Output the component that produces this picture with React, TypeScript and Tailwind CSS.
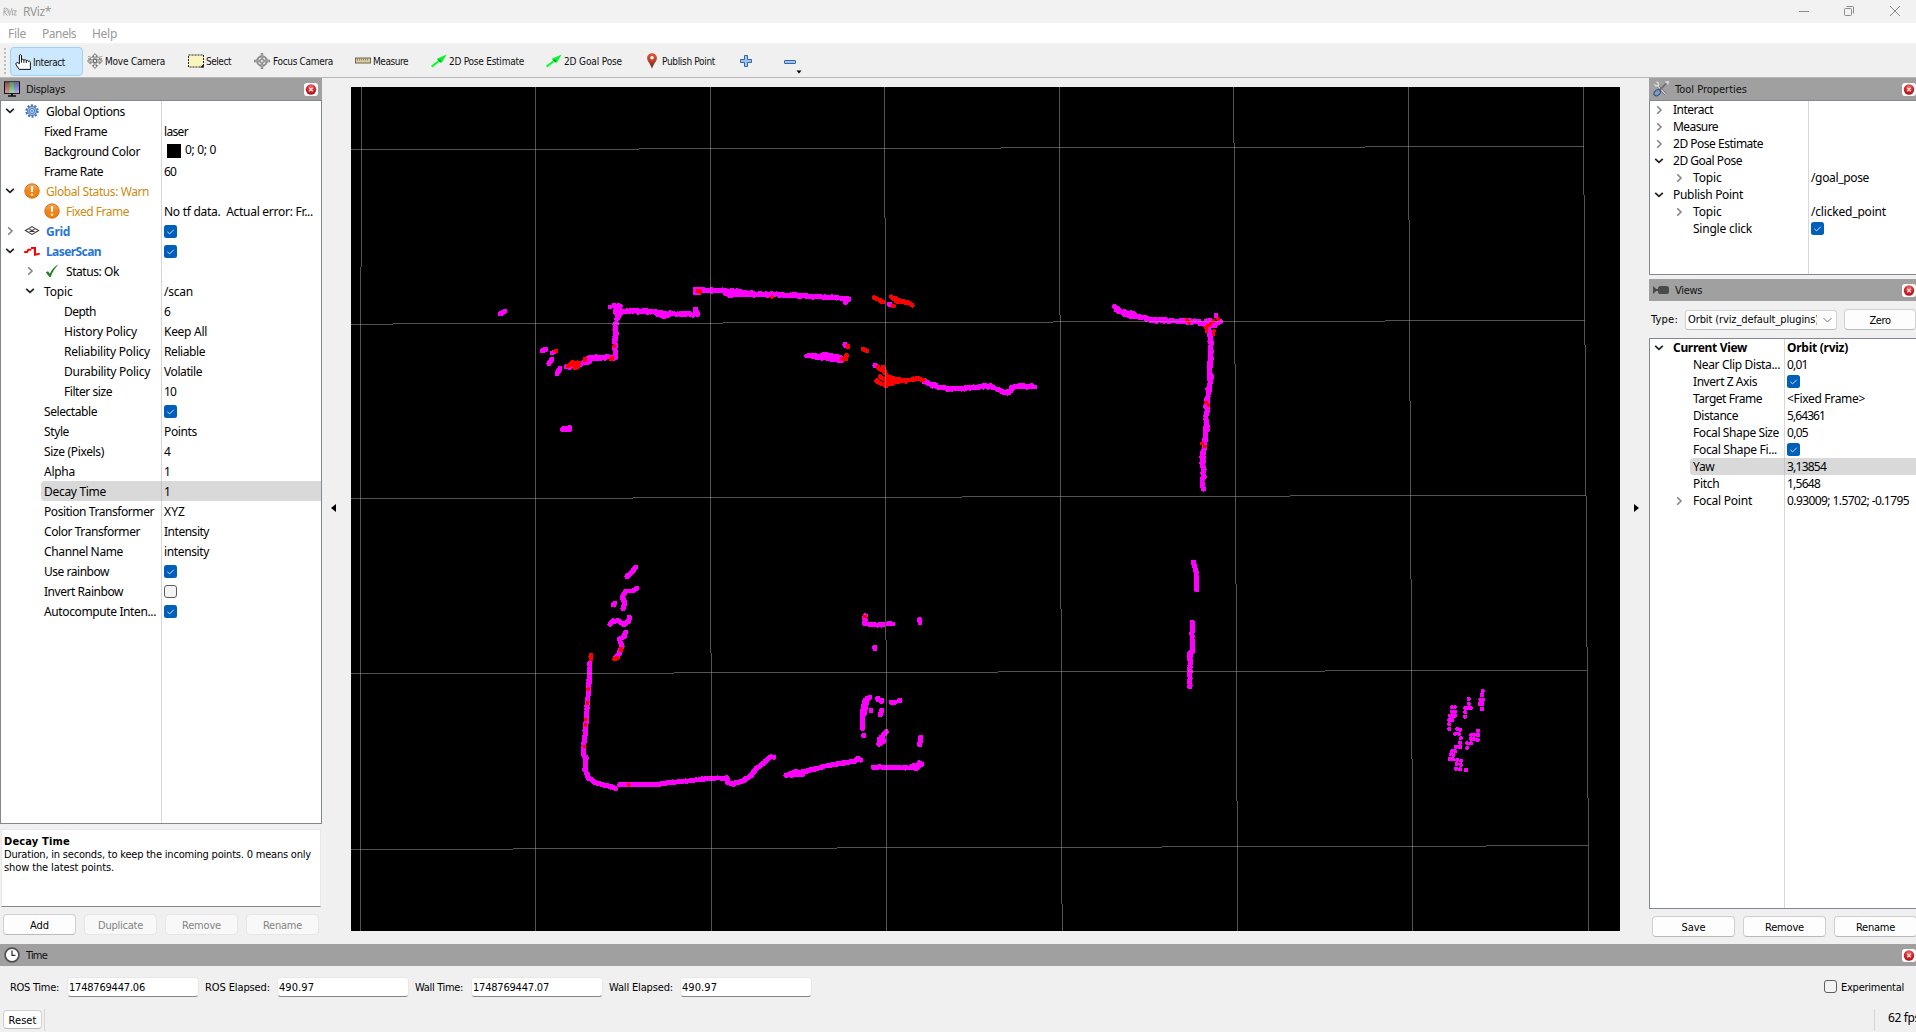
import { useLayoutEffect, useRef } from 'react';
import type { ReactNode } from 'react';

/* ---------- text ---------- */

// One line of text whose tracking is adjusted so that it is `w` pixels wide.
function T({ w, children, className = '' }: { w: number; children: string; className?: string }) {
  const ref = useRef<HTMLSpanElement>(null);
  useLayoutEffect(() => {
    const el = ref.current;
    if (!el) return;
    el.style.letterSpacing = '0px';
    const natural = el.getBoundingClientRect().width;
    el.style.letterSpacing = `${(w - natural) / children.length}px`;
  }, [w, children]);
  return (
    <span ref={ref} className={`inline-block shrink-0 whitespace-pre ${className}`}>
      {children}
    </span>
  );
}

/* ---------- small icons ---------- */

function ChevronDown() {
  return (
    <svg className="h-3 w-3" viewBox="0 0 12 12" fill="none" stroke="#222" strokeWidth="1.7">
      <path d="M2.2 3.8 6 7.4 9.8 3.8" />
    </svg>
  );
}

function ChevronRight() {
  return (
    <svg className="h-3 w-3" viewBox="0 0 12 12" fill="none" stroke="#868686" strokeWidth="1.6">
      <path d="M4.2 2.2 8 6 4.2 9.8" />
    </svg>
  );
}

function CloseBadge() {
  return (
    <svg className="h-[13px] w-[14px]" viewBox="0 0 14 13">
      <defs>
        <radialGradient id="closeFill" cx="0.5" cy="0.25" r="0.8">
          <stop offset="0" stopColor="#ea6a6a" />
          <stop offset="0.6" stopColor="#cf1f26" />
          <stop offset="1" stopColor="#a80f16" />
        </radialGradient>
      </defs>
      <rect width="14" height="13" rx="3" fill="#fff" />
      <circle cx="7" cy="6.5" r="5.2" fill="url(#closeFill)" />
      <path d="M5.2 4.7 8.8 8.3M8.8 4.7 5.2 8.3" stroke="#f6dada" strokeWidth="1.5" />
    </svg>
  );
}

function Check({ on }: { on: boolean }) {
  return on ? (
    <svg className="h-[13px] w-[13px]" viewBox="0 0 13 13">
      <rect width="13" height="13" rx="2.5" fill="#005fb8" />
      <path d="M3.4 6.8 5.6 8.9 9.8 4.7" fill="none" stroke="#cfe0f2" strokeWidth="1" />
    </svg>
  ) : (
    <svg className="h-[13px] w-[13px]" viewBox="0 0 13 13">
      <rect x="0.5" y="0.5" width="12" height="12" rx="2.5" fill="#f3f3f3" stroke="#5f5f5f" />
    </svg>
  );
}

function GearIcon() {
  return (
    <svg className="h-[14px] w-[14px]" viewBox="-7 -7 14 14">
      <circle r="5.6" fill="none" stroke="#3f6fae" strokeWidth="2.2" strokeDasharray="2 1.52" />
      <circle r="4.7" fill="#8fb4e0" stroke="#4a7dbd" strokeWidth="0.9" />
      <circle r="2.5" fill="#c3d8f2" stroke="#3f6fae" strokeWidth="0.8" />
      <circle r="0.9" fill="#4a7dbd" />
    </svg>
  );
}

function WarnIcon() {
  return (
    <svg className="h-4 w-4" viewBox="0 0 16 16">
      <defs>
        <linearGradient id="warnFill" x1="0" y1="0" x2="0" y2="1">
          <stop offset="0" stopColor="#f9a85a" />
          <stop offset="0.5" stopColor="#f08519" />
          <stop offset="1" stopColor="#f57d05" />
        </linearGradient>
      </defs>
      <circle cx="8" cy="8" r="7.2" fill="url(#warnFill)" stroke="#c96606" strokeWidth="0.9" />
      <path d="M8 3.2V8.8" stroke="#fff" strokeWidth="2.1" />
      <circle cx="8" cy="11.6" r="1.2" fill="#fff" />
    </svg>
  );
}

function GridIcon() {
  return (
    <svg className="h-4 w-4" viewBox="0 0 16 16" fill="none" stroke="#3c3c3c" strokeWidth="1.1">
      <path d="M8 3.6 14.6 7.5 8 11.4 1.4 7.5ZM4.7 5.6 11.3 9.5M11.3 5.6 4.7 9.5" />
    </svg>
  );
}

function ScanIcon() {
  return (
    <svg className="h-4 w-4" viewBox="0 0 16 16" fill="none" stroke="#f00" strokeWidth="2">
      <path d="M0.2 9H3L4.4 6.8 7.4 6.6M7 5H11V11.8L15.8 10.6" />
    </svg>
  );
}

function OkIcon() {
  return (
    <svg className="h-[14px] w-[14px]" viewBox="0 0 14 14">
      <path d="M0.8 8.2 3 7.2 4.9 9.8C6.8 5.6 9.6 2.4 13.4 0.6 10 4 7.6 8 5.6 13H4.4Z" fill="#1f7d22" />
    </svg>
  );
}

function MonitorIcon() {
  return (
    <svg className="h-4 w-4" viewBox="0 0 16 16">
      <defs>
        <linearGradient id="screenShade" x1="0" y1="0" x2="0" y2="1">
          <stop offset="0" stopColor="#000" stopOpacity="0.25" />
          <stop offset="1" stopColor="#fff" stopOpacity="0.35" />
        </linearGradient>
      </defs>
      <rect x="0.5" y="0.8" width="15" height="11.6" fill="#c86a6e" stroke="#111" />
      <rect x="5.5" y="1.3" width="4.8" height="10.6" fill="#6fd183" />
      <rect x="10.3" y="1.3" width="4.7" height="10.6" fill="#8c86e8" />
      <rect x="1" y="1.3" width="14" height="10.6" fill="url(#screenShade)" />
      <path d="M7 12.8H9V14.4H7ZM4 14.3H12V15.7H4Z" fill="#111" />
    </svg>
  );
}

function ToolsIcon() {
  return (
    <svg className="h-4 w-4" viewBox="0 0 16 16" fill="none">
      <path d="M4.5 4.8 12.6 13.4" stroke="#5b5b5b" strokeWidth="2.4" />
      <path d="M4.5 4.8 12.6 13.4" stroke="#dcdcdc" strokeWidth="1.3" />
      <path d="M1.2 3.2 3.2 5.2 5.4 4.2 5.2 2 3.4 0.8" stroke="#d6d6d6" strokeWidth="1.5" />
      <path d="M6.2 9.6 13 2.6" stroke="#6a6a6a" strokeWidth="1.6" />
      <path d="M12.4 1.2 15.2 0.8 14.8 3.4" stroke="#e4e4e4" strokeWidth="1.2" />
      <ellipse cx="4.2" cy="11.8" rx="3.6" ry="2.5" transform="rotate(-42 4.2 11.8)" fill="#7d9cc6" stroke="#2a4a7c" />
    </svg>
  );
}

function CameraIcon() {
  return (
    <svg className="h-4 w-4" viewBox="0 0 16 16" fill="#4a4a4a">
      <rect x="5" y="4" width="11" height="8" rx="2.6" />
      <path d="M0 4 4.4 8 0 12ZM3.5 7H6V9H3.5Z" />
    </svg>
  );
}

function ClockIcon() {
  return (
    <svg className="h-4 w-4" viewBox="0 0 16 16">
      <circle cx="8" cy="8" r="6.9" fill="#fff" stroke="#4f4f4f" strokeWidth="1.7" />
      <path d="M8 3.6V8.4H11.4" fill="none" stroke="#333" strokeWidth="1.3" />
    </svg>
  );
}

/* ---------- toolbar icons ---------- */

function HandIcon() {
  return (
    <svg className="h-4 w-4" viewBox="0 0 16 16">
      <path
        d="M4.4 9.6V1.8C4.4 0.3 6.5 0.3 6.5 1.8V6.2C6.5 4.9 8.9 4.9 8.9 6.4 9 5.3 11.3 5.4 11.3 6.9 11.6 5.9 13.6 6.2 13.6 7.6 14 6.9 15.4 7.2 15.4 8.4V15.4H4.2L1.1 10.9C0.2 8.9 2 8 3.1 9Z"
        fill="#fff"
        stroke="#111"
        strokeWidth="1"
      />
      <path d="M6.5 6.2V8.6M8.9 6.4V8.8M11.3 6.9V9" stroke="#111" strokeWidth="1" />
    </svg>
  );
}

function MoveIcon() {
  return (
    <svg className="h-4 w-4" viewBox="0 0 16 16" fill="#e8e8e8" stroke="#555" strokeWidth="0.8">
      <path d="M8 0.6 10.6 3.4H9V6.9H12.6V5.2L15.5 8 12.6 10.8V9.1H9V12.6H10.6L8 15.4 5.4 12.6H7V9.1H3.4V10.8L0.5 8 3.4 5.2V6.9H7V3.4H5.4Z" />
      <path d="M0.8 3.4 6 4.8M10 4.8 15.4 3.4M1.4 5 4 11M14.6 5 12 11" stroke="#8a8a8a" />
      <circle cx="8" cy="8" r="1.7" />
    </svg>
  );
}

function SelectIcon() {
  return (
    <svg className="h-[14px] w-4" viewBox="0 0 16 14">
      <rect x="0.5" y="1" width="15" height="12" fill="#fbf5bd" stroke="#222" strokeDasharray="2 1" />
      <path d="M15.8 10V13.4H12.2Z" fill="#111" />
    </svg>
  );
}

function FocusIcon() {
  return (
    <svg className="h-4 w-4" viewBox="0 0 16 16" fill="none">
      <circle cx="8" cy="8" r="4.8" stroke="#8b8b8b" strokeWidth="2" />
      <path d="M8 0V16M0 8H16" stroke="#7a7a7a" strokeWidth="2.4" />
      <path d="M8 0.6V15.4M0.6 8H15.4" stroke="#c4c4c4" strokeWidth="1" />
      <circle cx="8" cy="8" r="2" fill="#dadada" stroke="#777" strokeWidth="0.9" />
    </svg>
  );
}

function RulerIcon() {
  return (
    <svg className="h-4 w-4" viewBox="0 0 16 16">
      <rect x="0.5" y="5" width="15" height="5" fill="#dccf9e" stroke="#6b6552" />
      <path d="M2.5 5.5V7.5M4.5 5.5V7.5M6.5 5.5V7.5M8.5 5.5V7.5M10.5 5.5V7.5M12.5 5.5V7.5" stroke="#8a8164" strokeWidth="0.9" />
    </svg>
  );
}

function ArrowIcon() {
  return (
    <svg className="h-[14px] w-4" viewBox="0 0 16 14">
      <path d="M0.6 12.6 7.6 7.2" stroke="#00ff2a" strokeWidth="2" />
      <path d="M15.6 0.6 10.8 8.8 8.4 8.2 6 4.8Z" fill="#08f52c" />
      <path d="M6.2 5.4 9.6 5.8 9.8 8.6Z" fill="#0a8f1c" />
    </svg>
  );
}

function PinIcon() {
  return (
    <svg className="h-4 w-[10px]" viewBox="0 0 10 16">
      <defs>
        <linearGradient id="pinFill" x1="0" y1="0" x2="0" y2="1">
          <stop offset="0" stopColor="#e2553a" />
          <stop offset="0.5" stopColor="#b5432b" />
          <stop offset="1" stopColor="#4e2a1c" />
        </linearGradient>
      </defs>
      <path d="M5 0.2C8 0.2 9.9 2.4 9.9 5 9.9 8.6 6.4 10.6 5 15.8 3.6 10.6 0.1 8.6 0.1 5 0.1 2.4 2 0.2 5 0.2Z" fill="url(#pinFill)" />
      <circle cx="5" cy="4.8" r="1.7" fill="#fff" />
    </svg>
  );
}

function PlusIcon() {
  return (
    <svg className="h-3 w-3" viewBox="0 0 12 12">
      <path d="M4.5 0.5H7.5V4.5H11.5V7.5H7.5V11.5H4.5V7.5H0.5V4.5H4.5Z" fill="#9fc3ea" stroke="#3566a8" />
    </svg>
  );
}

function MinusIcon() {
  return (
    <svg className="h-3 w-3" viewBox="0 0 12 12">
      <rect x="0.5" y="4.5" width="11" height="3" rx="0.5" fill="#9fc3ea" stroke="#3566a8" />
    </svg>
  );
}

/* ---------- building blocks ---------- */

function DockHeader({ icon, title, w, closeClass = '' }: { icon: ReactNode; title: string; w: number; closeClass?: string }) {
  return (
    <div className={`flex h-[22px] shrink-0 items-center justify-between bg-[#a0a0a0] ${closeClass}`}>
      <div className="flex items-center gap-[6px] pl-1 font-['DejaVu_Sans_Condensed',sans-serif] text-[11px] text-[#111]">
        {icon}
        <T w={w} className="pt-px">{title}</T>
      </div>
      <CloseBadge />
    </div>
  );
}

function Button({ label, w, className }: { label: string; w: number; className: string }) {
  return (
    <button
      className={`flex shrink-0 items-center justify-center rounded-[4px] border font-['DejaVu_Sans_Condensed',sans-serif] text-[11px] leading-none ${className}`}
    >
      <T w={w} className="pt-px">{label}</T>
    </button>
  );
}

const enabled = 'border-[#d0d0d0] border-b-[#bababa] bg-[#fdfdfd] text-black';
const disabled = 'border-[#e6e6e6] bg-[#f8f8f8] text-[#848484]';

type Row = {
  name: string;
  w: number;
  depth: number;
  open?: boolean;
  icon?: ReactNode;
  value?: string;
  vw?: number;
  check?: boolean;
  swatch?: boolean;
  selected?: boolean;
  tone?: 'warn' | 'display' | 'bold';
};

const displayRows: Row[] = [
  { name: 'Global Options', w: 79, depth: 0, open: true, icon: <GearIcon /> },
  { name: 'Fixed Frame', w: 63, depth: 1, value: 'laser', vw: 24 },
  { name: 'Background Color', w: 96, depth: 1, value: '0; 0; 0', vw: 31, swatch: true },
  { name: 'Frame Rate', w: 59, depth: 1, value: '60', vw: 12 },
  { name: 'Global Status: Warn', w: 103, depth: 0, open: true, icon: <WarnIcon />, tone: 'warn' },
  { name: 'Fixed Frame', w: 63, depth: 1, icon: <WarnIcon />, tone: 'warn', value: 'No tf data.  Actual error: Fr...', vw: 149 },
  { name: 'Grid', w: 24, depth: 0, open: false, icon: <GridIcon />, tone: 'display', check: true },
  { name: 'LaserScan', w: 55, depth: 0, open: true, icon: <ScanIcon />, tone: 'display', check: true },
  { name: 'Status: Ok', w: 53, depth: 1, open: false, icon: <OkIcon /> },
  { name: 'Topic', w: 28.5, depth: 1, open: true, value: '/scan', vw: 29 },
  { name: 'Depth', w: 32, depth: 2, value: '6', vw: 6 },
  { name: 'History Policy', w: 73, depth: 2, value: 'Keep All', vw: 43 },
  { name: 'Reliability Policy', w: 86, depth: 2, value: 'Reliable', vw: 41 },
  { name: 'Durability Policy', w: 86, depth: 2, value: 'Volatile', vw: 38 },
  { name: 'Filter size', w: 48, depth: 2, value: '10', vw: 12 },
  { name: 'Selectable', w: 53, depth: 1, check: true },
  { name: 'Style', w: 25, depth: 1, value: 'Points', vw: 33 },
  { name: 'Size (Pixels)', w: 60, depth: 1, value: '4', vw: 6 },
  { name: 'Alpha', w: 31, depth: 1, value: '1', vw: 6 },
  { name: 'Decay Time', w: 62, depth: 1, value: '1', vw: 6, selected: true },
  { name: 'Position Transformer', w: 110, depth: 1, value: 'XYZ', vw: 21 },
  { name: 'Color Transformer', w: 96, depth: 1, value: 'Intensity', vw: 45 },
  { name: 'Channel Name', w: 79, depth: 1, value: 'intensity', vw: 45 },
  { name: 'Use rainbow', w: 65, depth: 1, check: true },
  { name: 'Invert Rainbow', w: 79, depth: 1, check: false },
  { name: 'Autocompute Inten...', w: 112, depth: 1, check: true },
];

const toolRows: Row[] = [
  { name: 'Interact', w: 40, depth: 0, open: false },
  { name: 'Measure', w: 45, depth: 0, open: false },
  { name: '2D Pose Estimate', w: 90, depth: 0, open: false },
  { name: '2D Goal Pose', w: 69, depth: 0, open: true },
  { name: 'Topic', w: 28.5, depth: 1, open: false, value: '/goal_pose', vw: 58 },
  { name: 'Publish Point', w: 70, depth: 0, open: true },
  { name: 'Topic', w: 28.5, depth: 1, open: false, value: '/clicked_point', vw: 75 },
  { name: 'Single click', w: 59, depth: 1, check: true },
];

const viewRows: Row[] = [
  { name: 'Current View', w: 74, depth: 0, open: true, value: 'Orbit (rviz)', vw: 61, tone: 'bold' },
  { name: 'Near Clip Dista...', w: 87, depth: 1, value: '0,01', vw: 20.5 },
  { name: 'Invert Z Axis', w: 64, depth: 1, check: true },
  { name: 'Target Frame', w: 69, depth: 1, value: '<Fixed Frame>', vw: 78 },
  { name: 'Distance', w: 45, depth: 1, value: '5,64361', vw: 38 },
  { name: 'Focal Shape Size', w: 86, depth: 1, value: '0,05', vw: 21 },
  { name: 'Focal Shape Fi...', w: 84, depth: 1, check: true },
  { name: 'Yaw', w: 21.5, depth: 1, value: '3,13854', vw: 39, selected: true },
  { name: 'Pitch', w: 26.5, depth: 1, value: '1,5648', vw: 33 },
  { name: 'Focal Point', w: 59, depth: 1, open: false, value: '0.93009; 1.5702; -0.1795', vw: 122 },
];

function toneClass(tone: Row['tone']) {
  if (tone === 'warn') return 'text-[#cd8b11]';
  if (tone === 'display') return 'font-bold text-[#2876d1]';
  if (tone === 'bold') return 'font-bold text-black';
  return 'text-black';
}

// Two-column property tree: an indented name column and a value column.
function Tree({
  rows,
  nameCol,
  rowH,
  textPad = '',
  chevronPad,
  className,
}: {
  rows: Row[];
  nameCol: string;
  rowH: string;
  textPad?: string;
  chevronPad: string;
  className: string;
}) {
  return (
    <div className={`flex flex-col overflow-hidden border border-[#828790] bg-white font-['Noto_Sans',sans-serif] text-[12px] leading-none ${className}`}>
      {rows.map((r, i) => (
        <div key={i} className={`flex shrink-0 ${rowH}`}>
          <div className={`flex items-center border-r ${r.selected ? 'border-[#c4c4c4]' : 'border-[#d8d8d8]'} ${nameCol}`}>
            {r.depth > 0 && <div className="w-5 shrink-0" />}
            {r.depth > 1 && <div className="w-5 shrink-0" />}
            <div className={`flex w-5 shrink-0 items-center justify-center ${chevronPad}`}>
              {r.open === true && <ChevronDown />}
              {r.open === false && <ChevronRight />}
            </div>
            <div className={`flex h-full flex-1 items-center rounded-l-sm ${r.selected ? 'bg-[#d9d9d9]' : ''}`}>
              {r.icon ? <div className="mr-[3px] flex w-[22px] justify-center">{r.icon}</div> : <div className="w-[3px]" />}
              <T w={r.w} className={`${textPad} ${toneClass(r.tone)}`}>
                {r.name}
              </T>
            </div>
          </div>
          <div className={`flex flex-1 items-center pl-[2px] ${r.selected ? 'bg-[#d9d9d9]' : ''}`}>
            {r.check !== undefined && <Check on={r.check} />}
            {r.swatch && <div className="mr-1 ml-[3px] h-[14px] w-[14px] bg-black" />}
            {r.value && (
              <T w={r.vw ?? 10} className={`${r.tone === 'bold' ? 'font-bold' : ''} ${r.swatch ? 'pb-[2px]' : textPad} text-black`}>
                {r.value}
              </T>
            )}
          </div>
        </div>
      ))}
      <div className="flex flex-1">
        <div className={`border-r border-[#d8d8d8] ${nameCol}`} />
      </div>
    </div>
  );
}

/* ---------- 3D view ---------- */

type P = [number, number];
type Trace = { pts: P[]; r?: number };

const magenta: Trace[] = [
  { pts: [[500, 314], [505, 311]], r: 0 },
  { pts: [[610, 307], [610, 307]], r: 0 },
  { pts: [[614, 306], [620, 306], [619, 311], [616, 313]] },
  { pts: [[616, 311], [645, 311.5], [660, 313], [697, 314.5]], r: 1 },
  { pts: [[657, 314], [664, 316], [669, 315]] },
  { pts: [[695, 309], [697, 314]], r: 0.5 },
  { pts: [[621, 312], [617, 319], [618, 312]] },
  { pts: [[616, 324], [615.5, 333], [615, 346], [614.5, 357]], r: 1 },
  { pts: [[612, 358], [595, 357], [589, 361], [580, 364], [567, 367]], r: 1 },
  { pts: [[588, 358], [603, 358]], r: 1 },
  { pts: [[542, 351], [546, 349]], r: 0 },
  { pts: [[552, 353], [554, 352]], r: 0 },
  { pts: [[552, 359], [549, 363.5]], r: 0 },
  { pts: [[560, 368], [557, 374]], r: 0 },
  { pts: [[563, 429.5], [566, 428], [570, 428]], r: 0.5 },
  { pts: [[564, 428.5], [569, 430]], r: 0.3 },
  { pts: [[695, 289], [695, 293], [699, 289], [699, 293]], r: 0 },
  { pts: [[702, 290], [733, 291], [748, 293.5], [798, 295.5], [824, 297], [848, 299], [846, 302.5]], r: 1 },
  { pts: [[725, 293], [730, 295], [754, 294.5]], r: 0.7 },
  { pts: [[889, 304], [890, 304.5]], r: 0 },
  { pts: [[807, 356], [815, 356], [825, 355], [838, 357], [843, 359]], r: 1 },
  { pts: [[815, 357], [832, 358.5], [841, 360]], r: 0.8 },
  { pts: [[845, 344.5], [846, 346]], r: 0 },
  { pts: [[875, 365.5], [876, 366]], r: 0 },
  { pts: [[924, 381], [933.5, 385.5], [949, 388.5], [962, 388.5], [973.5, 387], [991, 386], [1002, 391], [1008, 393], [1012, 388.5], [1021.5, 386], [1034, 386.5]], r: 1 },
  { pts: [[636, 567], [631.5, 572.5], [627, 576.5]], r: 0 },
  { pts: [[637, 588], [633, 591], [626, 591], [622, 597], [625, 603], [623, 608.5]], r: 0 },
  { pts: [[615, 603], [613.5, 605]], r: 0 },
  { pts: [[610, 624.5], [613, 621], [618, 621], [624, 624.5], [629, 621], [629.5, 617]], r: 0.3 },
  { pts: [[625.6, 632], [624, 637], [619.5, 639], [622, 646.5], [618.5, 655], [615, 658]], r: 0.2 },
  { pts: [[590, 663], [589, 683], [587.3, 703], [586, 723], [584.3, 743], [583, 754], [586, 758], [585, 770], [588.3, 777.5], [595, 782.5], [606.5, 785.7], [615.5, 788]], r: 0.4 },
  { pts: [[619.5, 784.5], [656.7, 784.5], [670, 782.7], [693, 780], [706.7, 778.7], [726.7, 778], [727.7, 782.5], [733, 784], [743.5, 780.7], [750, 776], [756.7, 768.5], [770, 757.3], [773.5, 757]], r: 0.5 },
  { pts: [[786, 775], [805, 771.5], [823, 766.7], [843, 763], [855, 761], [857.7, 758.5], [861, 760]], r: 0.5 },
  { pts: [[790, 775], [802, 774.5], [796, 771.5], [793, 773.5]], r: 0.5 },
  { pts: [[865, 616], [865, 623.5], [870, 624.7], [883, 624.7]], r: 0.4 },
  { pts: [[888, 624], [892.5, 624]], r: 0.4 },
  { pts: [[919.5, 619.5], [920, 623]], r: 0 },
  { pts: [[874.7, 647], [875, 648.5]], r: 0 },
  { pts: [[870, 697], [865, 700], [862.7, 710], [862.3, 729]], r: 0.4 },
  { pts: [[867, 698], [864.5, 713]], r: 0.4 },
  { pts: [[863.7, 735], [863.7, 736]], r: 0 },
  { pts: [[877.7, 698], [878, 699.5]], r: 0 },
  { pts: [[882, 700.5], [881.5, 701.5]], r: 0 },
  { pts: [[891, 702.3], [895, 702.3]], r: 0.2 },
  { pts: [[899.7, 700], [899.7, 701]], r: 0 },
  { pts: [[871, 710], [871, 711]], r: 0 },
  { pts: [[881.7, 710.5], [880, 714.5]], r: 0.3 },
  { pts: [[886, 732], [881.7, 737.3], [879, 744], [884, 741]], r: 0.3 },
  { pts: [[879, 739], [880, 743]], r: 0 },
  { pts: [[920.7, 737], [919.7, 745]], r: 0.2 },
  { pts: [[873, 767], [896.7, 767.7], [916.7, 768.3], [921.5, 764], [919, 763]], r: 0.4 },
  { pts: [[912, 766], [921, 765]], r: 0.4 },
  { pts: [[1114, 306.5], [1120, 311.7], [1128, 315.5], [1140, 317.3], [1153, 320], [1183, 321], [1203, 322.7], [1211, 319.5]], r: 1.2 },
  { pts: [[1121, 312], [1132, 313.5], [1140, 317]], r: 0.8 },
  { pts: [[1216, 315.3], [1216, 316]], r: 0 },
  { pts: [[1220, 321.7], [1215, 325], [1205, 325]], r: 0.5 },
  { pts: [[1209.3, 328], [1210.7, 340], [1210.3, 376.7], [1209, 389], [1206.7, 400], [1206.5, 430], [1205, 440], [1202.7, 456.7], [1203.3, 476.7], [1202.5, 490]], r: 1.1 },
  { pts: [[1193.3, 562], [1196, 571.7], [1196.7, 590]], r: 0.2 },
  { pts: [[1192.3, 622], [1192.3, 651.7], [1190, 653.3], [1190, 670], [1189.7, 686.5]], r: 0.4 },
];

const red: Trace[] = [
  { pts: [[698, 291], [700, 291]], r: 0.4 },
  { pts: [[568, 366], [572, 363], [579, 363], [578, 366], [575, 368]], r: 0.5 },
  { pts: [[571, 365], [575, 365]], r: 0.5 },
  { pts: [[585, 359], [585, 360]], r: 0 },
  { pts: [[611, 359], [612, 358]], r: 0 },
  { pts: [[555.5, 351], [556, 351]], r: 0 },
  { pts: [[874, 297.5], [883, 302]], r: 0.4 },
  { pts: [[890.5, 297], [897, 300], [913, 304.5]], r: 0.8 },
  { pts: [[896, 301], [908, 303]], r: 0.5 },
  { pts: [[893, 306], [893.5, 306]], r: 0 },
  { pts: [[846.5, 355], [846, 359], [842, 359]], r: 0.2 },
  { pts: [[848, 346], [848, 347]], r: 0 },
  { pts: [[863, 349], [867, 351]], r: 0 },
  { pts: [[878, 367], [884, 371]], r: 0.8 },
  { pts: [[883, 367], [885, 373]], r: 0.2 },
  { pts: [[887.5, 376], [895, 379.5], [905, 381], [916, 378.5], [923, 380]], r: 0.8 },
  { pts: [[876, 380.5], [885, 385.5], [892, 383.5], [900, 381]], r: 0.8 },
  { pts: [[880, 377], [886, 380], [892, 381]], r: 0.8 },
  { pts: [[621, 649], [621, 650]], r: 0 },
  { pts: [[614.5, 659], [617.5, 658]], r: 0 },
  { pts: [[591, 655], [590.7, 659]], r: 0.3 },
];

// Isolated red returns that sit inside the magenta traces.
const redSpecks: P[] = [
  [588, 689], [587.5, 703], [585.7, 719.5], [585.7, 725], [584.7, 746.5], [628.7, 784.7], [865, 616.5],
  [1218, 319], [1213.5, 321], [1206.5, 331], [1214, 331], [1213.5, 334.5], [1187, 320], [1189, 322],
  [1210.5, 324], [1208, 325.5], [1206, 327.5], [1206, 402.5], [1208.5, 405.3], [1202, 443.5], [1205, 446.3],
  [614, 346], [772, 297],
];

const specks: P[] = [
  [1482.7, 691], [1482, 695], [1480.5, 699.7], [1483, 699.7], [1480, 704], [1482.5, 704], [1482, 709],
  [1468.7, 699], [1468.7, 703.7], [1465.3, 708], [1468, 708], [1470.7, 708], [1465.3, 712.3], [1465, 716.7],
  [1451.7, 707.3], [1454.7, 707.3], [1451.7, 711.7], [1455, 711.7], [1450, 715.7], [1452.7, 715.7], [1455.3, 715.7],
  [1449.3, 720], [1452.3, 720], [1449.3, 724.3], [1449.3, 729], [1457.3, 729], [1460, 729.7], [1455.3, 733.7],
  [1458.7, 733.7], [1460.7, 738.3], [1460, 742.7], [1456, 746.7], [1460, 747], [1452.3, 750.7], [1455.3, 751.3],
  [1451, 754.3], [1453.3, 755], [1450, 759], [1453.3, 759.3], [1457.3, 759.7], [1461.3, 760.7], [1456.7, 764.3],
  [1460.7, 764.7], [1456, 768.7], [1460, 769.3], [1466, 770], [1478, 730.7], [1471.3, 734.7], [1474.3, 734.7],
  [1478, 735], [1471, 738.7], [1474, 739.3], [1477.7, 740], [1467.3, 743.3], [1471, 743.3], [1467.3, 747.7],
];

// Samples each trace every 1.5px and scatters the samples by up to r pixels, as range noise does.
function toDots(traces: Trace[]) {
  let seed = 7;
  const rnd = () => {
    seed = (seed * 1103515245 + 12345) % 2147483648;
    return seed / 2147483648 - 0.5;
  };
  let d = '';
  for (const { pts, r = 0.5 } of traces) {
    for (let i = 0; i + 1 < pts.length; i++) {
      const [x1, y1] = pts[i];
      const [x2, y2] = pts[i + 1];
      const n = Math.max(1, Math.round(Math.hypot(x2 - x1, y2 - y1) / 1.5));
      for (let k = 0; k <= n; k++) {
        const x = x1 + ((x2 - x1) * k) / n + rnd() * 2 * r;
        const y = y1 + ((y2 - y1) * k) / n + rnd() * 2 * r;
        d += `M${x.toFixed(1)} ${y.toFixed(1)}h.01`;
      }
    }
  }
  return d;
}

const points = (list: P[]) => list.map(([x, y]) => `M${x} ${y}h.01`).join('');

const gridLines: [number, number, number, number][] = [
  [361.24, 87, 360.2, 931],
  [535.5, 87, 535.5, 931],
  [710.2, 87, 711.4, 931],
  [884.7, 87, 886.7, 931],
  [1059.23, 87, 1062.1, 931],
  [1233.75, 87, 1237.6, 931],
  [1408.27, 87, 1412.96, 931],
  [1583.3, 87, 1588.9, 931],
  [351, 149.8, 1584, 146.4],
  [351, 324.14, 1585, 320.4],
  [351, 498.87, 1586, 495.1],
  [351, 674, 1587, 670.2],
  [351, 849.5, 1588, 845.7],
];

function Viewport() {
  return (
    <svg className="mt-[9px] h-[844px] w-[1269px] shrink-0 bg-black" viewBox="351 87 1269 844" shapeRendering="crispEdges">
      <g fill="none" strokeLinecap="round">
        <path d={toDots(magenta)} stroke="#ff00ff" strokeWidth="5" />
        <path d={points(specks)} stroke="#ff00ff" strokeWidth="4.3" />
        <path d={toDots(red)} stroke="#ff0000" strokeWidth="4.6" />
        <path d={points(redSpecks)} stroke="#ff0000" strokeWidth="3.8" />
      </g>
      {gridLines.map(([x1, y1, x2, y2], i) => (
        <line key={i} x1={x1} y1={y1} x2={x2} y2={y2} stroke="#a0a0a0" strokeOpacity="0.52" strokeWidth="1" />
      ))}
    </svg>
  );
}

/* ---------- page ---------- */

function Tool({ icon, label, w, className }: { icon: ReactNode; label: string; w: number; className: string }) {
  return (
    <div className={`flex shrink-0 items-center ${className}`}>
      {icon}
      <T w={w} className="pt-px">{label}</T>
    </div>
  );
}

function TimeField({ label, lw, value, vw, labelBox }: { label: string; lw: number; value: string; vw: number; labelBox: string }) {
  return (
    <div className="flex items-center">
      <div className={labelBox}>
        <T w={lw} className="pt-px">{label}</T>
      </div>
      <div className="flex h-5 w-[132px] items-center rounded-sm border border-[#e8e8e8] border-b-[#868686] bg-white pl-px">
        <T w={vw} className="pt-px">{value}</T>
      </div>
    </div>
  );
}

export default function App() {
  return (
    <div className="flex h-[1032px] w-[1916px] flex-col overflow-hidden bg-[#f0f0f0] font-['DejaVu_Sans_Condensed',sans-serif] text-[11px] leading-none text-black">
      {/* title bar */}
      <div className="flex h-[23px] shrink-0 items-center justify-between bg-[#f2f2f2] font-['Noto_Sans',sans-serif] text-[12px] text-[#979797]">
        <div className="flex items-center pl-[3px]">
          <svg className="mr-[6px] h-[10px] w-[14px]" viewBox="0 0 14 10" fill="none" stroke="#a9a9a9">
            <path d="M0.8 8.5 1.2 1.2C5.4 0.6 5 4.6 1.2 4.6L4.4 8.6M4.6 1.2 6.6 8.4 9 1M9.4 3.4V8.4M10.4 3.6H13.4L10.8 8H13.6" />
            <path d="M2.4 2 6 7.6M5.6 2.2 8 7.2M10 2 12.6 6.4" stroke="#cfcfcf" />
          </svg>
          <T w={28} className="pt-px">RViz*</T>
        </div>
        <svg className="mr-[15px] h-[14px] w-[103px]" viewBox="0 0 103 14" fill="none" stroke="#8c8c8c">
          <path d="M1 6.5H11" />
          <rect x="46.5" y="3.5" width="7" height="7" rx="1" />
          <path d="M48.5 1.5H54.5Q55.5 1.5 55.5 2.5V8.5" />
          <path d="M92 1 102 11M102 1 92 11" />
        </svg>
      </div>

      {/* menu */}
      <div className="flex h-[22px] shrink-0 items-center border-b-2 border-[#f2f2f2] bg-white pt-[2px] pl-2 font-['Noto_Sans',sans-serif] text-[12px] text-[#9a9a9a]">
        <T w={18} className="mr-4">File</T>
        <T w={34} className="mr-4">Panels</T>
        <T w={25}>Help</T>
      </div>

      {/* toolbar */}
      <div className="flex h-[33px] shrink-0 items-center border-b border-[#b8b8b8] pl-1 text-[10px] text-[#111]">
        <div className="mr-1 flex flex-col gap-[2px]">
          {[0, 1, 2, 3, 4, 5, 6].map((i) => (
            <div key={i} className="h-[2px] w-[2px] bg-[#bcbcbc]" />
          ))}
        </div>
        <Tool icon={<HandIcon />} label="Interact" w={32} className="mr-1 h-[29px] w-[73px] gap-[2px] rounded-sm border border-[#99d1ff] bg-[#cce8ff] pt-[2px] pl-1" />
        <Tool icon={<MoveIcon />} label="Move Camera" w={60} className="w-[101px] gap-[2px]" />
        <Tool icon={<SelectIcon />} label="Select" w={25} className="w-[66px] gap-[2px]" />
        <Tool icon={<FocusIcon />} label="Focus Camera" w={60} className="w-[101px] gap-[3px]" />
        <Tool icon={<RulerIcon />} label="Measure" w={35} className="w-[76px] gap-[2px]" />
        <Tool icon={<ArrowIcon />} label="2D Pose Estimate" w={75} className="w-[115px] gap-[2px]" />
        <Tool icon={<ArrowIcon />} label="2D Goal Pose" w={58} className="w-[101px] gap-[2px]" />
        <Tool icon={<PinIcon />} label="Publish Point" w={53} className="w-[93px] gap-[5px]" />
        <div className="mr-8">
          <PlusIcon />
        </div>
        <div className="flex pt-[1px]">
          <MinusIcon />
          <svg className="mt-[13px] -mb-[7px] h-[6px] w-[6px]" viewBox="0 0 6 6">
            <path d="M0.5 1.5H5.5L3 4.5Z" />
          </svg>
        </div>
      </div>

      {/* docks and 3D view */}
      <div className="flex h-[866px] shrink-0">
        <div className="flex w-[322px] shrink-0 flex-col">
          <DockHeader icon={<MonitorIcon />} title="Displays" w={39} closeClass="pr-1" />
          <Tree rows={displayRows} nameCol="w-[161px]" rowH="h-5" textPad="pt-[2px]" chevronPad="pr-[2px] pb-px" className="h-[724px]" />
          <div className="mx-px mt-[5px] h-[78px] shrink-0 border border-[#e8e8e8] border-b-[#868686] bg-white pt-[5px] pl-[2px] leading-[13px]">
            <div className="font-bold">
              <T w={66}>Decay Time</T>
            </div>
            <div className="h-[13px]">
              <T w={307}>Duration, in seconds, to keep the incoming points. 0 means only</T>
            </div>
            <div className="h-[13px]">
              <T w={110}>show the latest points.</T>
            </div>
          </div>
          <div className="mt-[7px] flex gap-2 pl-[3px]">
            <Button label="Add" w={19} className={`h-[21px] w-[73px] ${enabled}`} />
            <Button label="Duplicate" w={45} className={`h-[21px] w-[73px] ${disabled}`} />
            <Button label="Remove" w={39} className={`h-[21px] w-[73px] ${disabled}`} />
            <Button label="Rename" w={39} className={`h-[21px] w-[73px] ${disabled}`} />
          </div>
        </div>
        <div className="flex w-[29px] shrink-0 items-center pb-[6px] pl-[9px]">
          <svg className="h-[8px] w-[5px]" viewBox="0 0 5 8">
            <path d="M5 0V8L0 4Z" />
          </svg>
        </div>
        <Viewport />
        <div className="flex w-[29px] shrink-0 items-center pb-[6px] pl-[14px]">
          <svg className="h-[8px] w-[5px]" viewBox="0 0 5 8">
            <path d="M0 0V8L5 4Z" />
          </svg>
        </div>
        <div className="flex w-[267px] shrink-0 flex-col">
          <DockHeader icon={<ToolsIcon />} title="Tool Properties" w={72} />
          <Tree rows={toolRows} nameCol="w-[159px]" rowH="h-[17px]" chevronPad="pr-[3px]" className="h-[175px] border-r-0" />
          <div className="h-1 shrink-0" />
          <DockHeader icon={<CameraIcon />} title="Views" w={27} />
          <div className="flex h-[37px] shrink-0 items-center overflow-hidden pl-[2px] text-[11px]">
            <T w={27} className="mr-[7px]">Type:</T>
            <div className="flex h-5 w-[152px] shrink-0 items-center justify-between rounded-[3px] border border-[#d2d2d2] border-b-[#bdbdbd] bg-[#fdfdfd] pr-1 pl-[2px]">
              <div className="flex w-[129px] overflow-hidden py-1">
                <T w={131}>Orbit (rviz_default_plugins)</T>
              </div>
              <svg className="h-2 w-[9px]" viewBox="0 0 9 8" fill="none" stroke="#777">
                <path d="M0.5 2 4.5 6 8.5 2" />
              </svg>
            </div>
            <Button label="Zero" w={21} className={`ml-[7px] h-[21px] w-[72px] ${enabled}`} />
          </div>
          <Tree rows={viewRows} nameCol="w-[135px]" rowH="h-[17px]" chevronPad="pr-[3px]" className="h-[571px] border-r-0" />
          <div className="mt-[7px] flex gap-2 overflow-hidden pl-[3px]">
            <Button label="Save" w={24} className={`h-[21px] w-[83px] ${enabled}`} />
            <Button label="Remove" w={39} className={`h-[21px] w-[83px] ${enabled}`} />
            <Button label="Rename" w={39} className={`h-[21px] w-[83px] ${enabled}`} />
          </div>
        </div>
      </div>

      {/* time panel */}
      <DockHeader icon={<ClockIcon />} title="Time" w={21} />
      <div className="flex h-[41px] shrink-0 items-center justify-between pl-[10px]">
        <div className="flex items-center">
          <TimeField label="ROS Time:" lw={49} value="1748769447.06" vw={76} labelBox="w-[57px]" />
          <TimeField label="ROS Elapsed:" lw={65} value="490.97" vw={35} labelBox="w-[78px] pl-[6px]" />
          <TimeField label="Wall Time:" lw={48} value="1748769447.07" vw={76} labelBox="w-[62px] pl-[6px]" />
          <TimeField label="Wall Elapsed:" lw={64} value="490.97" vw={35} labelBox="w-[77px] pl-[6px]" />
        </div>
        <div className="flex items-center gap-1 pr-[12px]">
          <Check on={false} />
          <T w={63} className="pt-px">Experimental</T>
        </div>
      </div>

      {/* status bar */}
      <div className="flex h-[25px] shrink-0 items-center justify-between">
        <div className="flex items-center gap-[2px] pl-[3px]">
          <Button label="Reset" w={28} className={`h-[19px] w-[39px] ${enabled}`} />
          <div className="h-[22px] w-px bg-[#d6d6d6]" />
        </div>
        <div className="flex w-[42px] items-center overflow-hidden">
          <div className="mr-[13px] h-[22px] w-px shrink-0 bg-[#d6d6d6]" />
          <T w={32} className="pt-1 pb-[7px] font-['Noto_Sans',sans-serif] text-[12px]">62 fps</T>
        </div>
      </div>
    </div>
  );
}
